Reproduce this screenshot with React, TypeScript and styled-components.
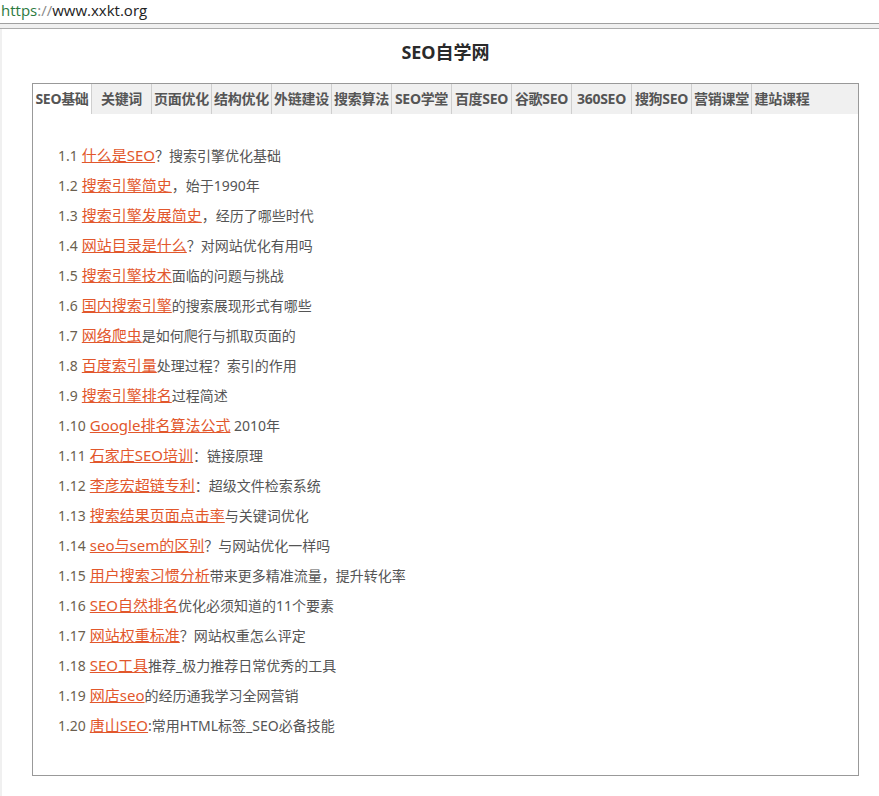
import React from 'react';
import styled, { createGlobalStyle } from 'styled-components';

const GlobalStyle = createGlobalStyle`
  html, body {
    margin: 0;
    padding: 0;
    background: #fff;
  }
  body {
    font-family: "Noto Sans", "Noto Sans CJK SC", sans-serif;
  }
`;

const AddressBar = styled.div`
  height: 23px;
  line-height: 20px;
  font-size: 15px;
  font-family: "Open Sans", "Noto Sans", sans-serif;
  color: #222;
  padding-left: 1px;
`;

const Scheme = styled.span`
  color: #2b7a3e;
`;

const Sep = styled.span`
  color: #8a8a8a;
`;

const Band = styled.div`
  height: 4px;
  background: #f0f0f0;
  border-top: 1px solid #a0a0a0;
  border-bottom: 1px solid #acacac;
`;

const Page = styled.div`
  border-left: 2px solid #f0f0f0;
  min-height: 767px;
  box-sizing: border-box;
  padding: 11px 0 0 30px;
`;

const Wrap = styled.div`
  width: 827px;
`;

const Title = styled.h1`
  margin: 0 0 19px;
  text-align: center;
  font-size: 18px;
  line-height: 24px;
  font-weight: 700;
  color: #2a2a2a;
  font-family: "Noto Sans", "Noto Sans CJK SC", sans-serif;
`;

const Box = styled.div`
  border: 1px solid #999;
`;

const Tabs = styled.ul`
  display: flex;
  margin: 0;
  padding: 0;
  list-style: none;
  background: #f0f0f0;
  height: 30px;
`;

const Tab = styled.li<{ $active?: boolean; $first?: boolean }>`
  width: ${(p) => (p.$first ? '59px' : '60px')};
  box-sizing: border-box;
  border-right: 1px solid #cfcfcf;
  background: ${(p) => (p.$active ? '#fff' : 'transparent')};
  text-align: center;
  line-height: 30px;
  font-size: 14px;
  font-weight: 700;
  color: #555;
  white-space: nowrap;
  letter-spacing: -0.3px;
  &:last-child {
    border-right: none;
  }
`;

const List = styled.ul`
  margin: 0;
  padding: 26px 0 35px 25px;
  list-style: none;
`;

const Item = styled.li`
  line-height: 30px;
  height: 30px;
  font-size: 14px;
  color: #555;
  white-space: nowrap;
`;

const Num = styled.span`
  font-size: 14px;
  color: #6a5f50;
  margin-right: 4px;
`;

const Link = styled.a`
  font-size: 15px;
  color: #e2572c;
  text-decoration: underline;
`;

const tabs = [
  'SEO基础', '关键词', '页面优化', '结构优化', '外链建设', '搜索算法', 'SEO学堂',
  '百度SEO', '谷歌SEO', '360SEO', '搜狗SEO', '营销课堂', '建站课程',
];

const items: [string, string][] = [
  ['什么是SEO', '？搜索引擎优化基础'],
  ['搜索引擎简史', '，始于1990年'],
  ['搜索引擎发展简史', '，经历了哪些时代'],
  ['网站目录是什么', '？对网站优化有用吗'],
  ['搜索引擎技术', '面临的问题与挑战'],
  ['国内搜索引擎', '的搜索展现形式有哪些'],
  ['网络爬虫', '是如何爬行与抓取页面的'],
  ['百度索引量', '处理过程？索引的作用'],
  ['搜索引擎排名', '过程简述'],
  ['Google排名算法公式', ' 2010年'],
  ['石家庄SEO培训', '：链接原理'],
  ['李彦宏超链专利', '：超级文件检索系统'],
  ['搜索结果页面点击率', '与关键词优化'],
  ['seo与sem的区别', '？与网站优化一样吗'],
  ['用户搜索习惯分析', '带来更多精准流量，提升转化率'],
  ['SEO自然排名', '优化必须知道的11个要素'],
  ['网站权重标准', '？网站权重怎么评定'],
  ['SEO工具', '推荐_极力推荐日常优秀的工具'],
  ['网店seo', '的经历通我学习全网营销'],
  ['唐山SEO', ':常用HTML标签_SEO必备技能'],
];

export default function App() {
  return (
    <>
      <GlobalStyle />
      <AddressBar>
        <Scheme>https</Scheme>
        <Sep>://</Sep>www.xxkt.org
      </AddressBar>
      <Band />
      <Page>
        <Wrap>
          <Title>SEO自学网</Title>
          <Box>
            <Tabs>
              {tabs.map((t, i) => (
                <Tab key={t} $active={i === 0} $first={i === 0}>
                  {t}
                </Tab>
              ))}
            </Tabs>
            <List>
              {items.map(([link, desc], i) => (
                <Item key={link}>
                  <Num>1.{i + 1}</Num>
                  <Link href="#">{link}</Link>
                  {desc}
                </Item>
              ))}
            </List>
          </Box>
        </Wrap>
      </Page>
    </>
  );
}
